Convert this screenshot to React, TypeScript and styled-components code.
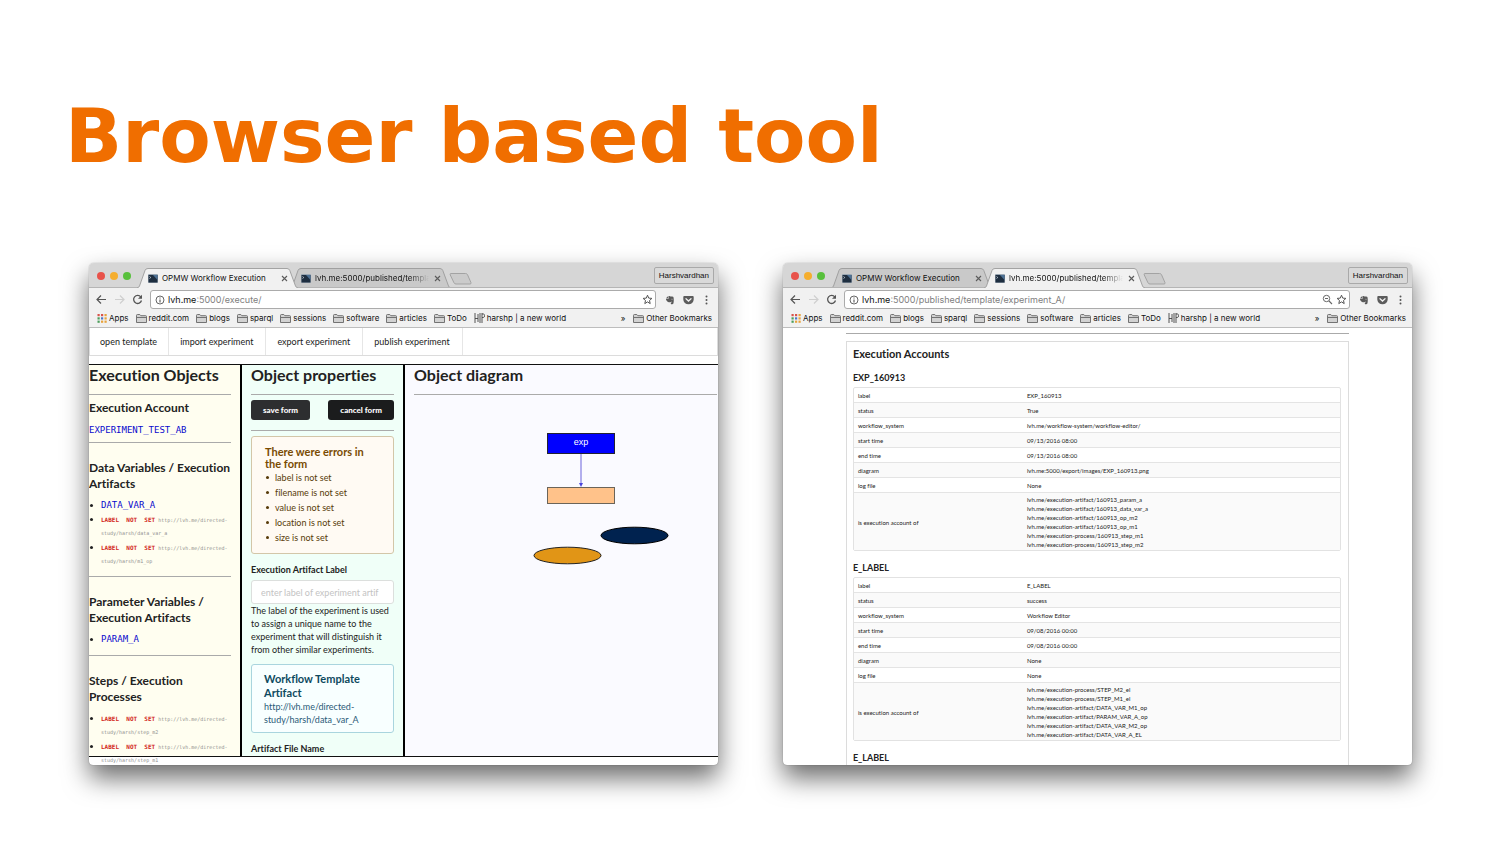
import React from "react";
import styled, { createGlobalStyle, css } from "styled-components";

const GlobalStyle = createGlobalStyle`
  *, *::before, *::after { box-sizing: border-box; }
  body { margin: 0; background: #fff; }
  h1, h2, h3, h4, p, ul { margin: 0; padding: 0; }
  button, input { font: inherit; color: inherit; }
  svg { flex: none; }
`;

const uiFont = `Inter, Roboto, sans-serif`;
const pageFont = `Lato, "Open Sans", sans-serif`;
const monoFont = `"DejaVu Sans Mono", "Liberation Mono", monospace`;

/* ---------- slide ---------- */

const Slide = styled.main`
  padding: 91px 88px 79px 89px;
`;

const Title = styled.h1`
  margin: 0 0 82px -24px;
  font: bold 75px/90px "DejaVu Sans", sans-serif;
  color: #f06e00;
`;

const Windows = styled.div`
  display: grid;
  grid-template-columns: repeat(2, minmax(0, 1fr));
  gap: 65px;
`;

/* ---------- browser window ---------- */

const WindowFrame = styled.section`
  display: flex;
  flex-direction: column;
  aspect-ratio: 629 / 502;
  overflow: hidden;
  border-radius: 5px 5px 4px 4px;
  background: #fff;
  box-shadow: 0 0 1px rgba(0, 0, 0, 0.5), 0 13px 26px rgba(0, 0, 0, 0.58);
`;

const Chrome = styled.header`
  flex: none;
  border-bottom: 1px solid #bdbdbd;
  background: #f1f1f1;
  font-family: ${uiFont};
  font-size: 8px;
  color: #111;
`;

const TabStrip = styled.div`
  display: flex;
  align-items: flex-end;
  height: 25px;
  background: #d6d6d6;
  box-shadow: inset 0 -1px #b5b5b5;
`;

const Lights = styled.div`
  display: flex;
  flex: none;
  align-self: center;
  gap: 5px;
  width: 48px;
  padding-left: 8px;
`;

const Light = styled.span<{ $color: string }>`
  width: 8px;
  height: 8px;
  border-radius: 50%;
  background: ${(p) => p.$color};
`;

const Tab = styled.div<{ $active: boolean }>`
  position: relative;
  z-index: ${(p) => (p.$active ? 1 : 0)};
  display: flex;
  flex: none;
  align-items: center;
  gap: 4px;
  width: 161px;
  height: 20px;
  margin-right: -8px;
  padding: 0 10px 0 11px;
`;

const TabShape = styled.svg`
  position: absolute;
  inset: 0;
  z-index: -1;
`;

const TabTitle = styled.span<{ $fade: boolean }>`
  flex: 1;
  min-width: 0;
  line-height: 12px;
  white-space: nowrap;
  ${(p) =>
    p.$fade &&
    css`
      mask-image: linear-gradient(to right, #000 82%, transparent);
    `}
`;

const IconButton = styled.button<{ $size?: number }>`
  display: flex;
  flex: none;
  align-items: center;
  justify-content: center;
  width: ${(p) => p.$size ?? 12}px;
  height: 12px;
  padding: 0;
  border: 0;
  background: none;
`;

const NewTab = styled(IconButton)`
  width: 24px;
  margin: 0 0 3px 6px;
`;

const Profile = styled.button`
  align-self: center;
  height: 17px;
  margin: 0 4px 0 auto;
  padding: 0 4px;
  border: 1px solid #a9a9a9;
  border-radius: 2px;
  background: #d9d9d9;
  font: 8px/14px "Liberation Sans", sans-serif;
`;

const Toolbar = styled.div`
  display: flex;
  align-items: center;
  gap: 6px;
  height: 23px;
  padding: 0 6px;
`;

const AddressBar = styled.label`
  display: flex;
  flex: 1;
  align-items: center;
  gap: 1px;
  min-width: 0;
  height: 19px;
  margin: 0 2px 0 1px;
  padding: 0 2px;
  border: 1px solid #ababab;
  border-radius: 3px;
  background: #fff;
  font-size: 9px;
  line-height: 14px;
`;

const AddressInput = styled.input`
  flex: 1;
  min-width: 0;
  height: 14px;
  margin-left: -1px;
  padding: 0;
  border: 0;
  outline: 0;
  background: none;
  color: #808080;
`;

const Bookmarks = styled.nav`
  display: flex;
  align-items: center;
  gap: 7px;
  height: 16px;
  padding: 0 6px 2px 8px;
  white-space: nowrap;
`;

const Bookmark = styled.a`
  display: flex;
  align-items: center;
  gap: 2px;
  color: inherit;
  line-height: 12px;
  text-decoration: none;
`;

const Overflow = styled(IconButton)`
  width: 6px;
  margin-left: auto;
`;

/* ---------- icons ---------- */

const Favicon = () => (
  <svg width="10" height="9" viewBox="0 0 10 9" aria-hidden="true">
    <rect width="10" height="9" rx="1" fill="#9aa7b3" />
    <rect x="0.5" y="1" width="9" height="7.5" fill="#1e2e40" />
    <path d="M5 1h4.500v5z" fill="#4d7195" />
    <path d="M1.500 2.500l1.300 1-1.300 1" stroke="#dfe8ef" strokeWidth="0.700" fill="none" />
  </svg>
);

const CloseIcon = () => (
  <svg width="7" height="7" viewBox="0 0 7 7" aria-hidden="true">
    <path d="M1 1l5 5M6 1L1 6" stroke="#5c5c5c" strokeWidth="1.100" />
  </svg>
);

const BackIcon = ({ forward = false }: { forward?: boolean }) => (
  <svg width="11" height="11" viewBox="0 0 11 11" aria-hidden="true">
    <path
      d={forward ? "M1 5.500h9M6 1.500l4 4-4 4" : "M10 5.500H1M5 1.500l-4 4 4 4"}
      stroke={forward ? "#cfcfcf" : "#555"}
      strokeWidth="1.200"
      fill="none"
    />
  </svg>
);

const ReloadIcon = () => (
  <svg width="11" height="11" viewBox="0 0 11 11" aria-hidden="true">
    <path d="M8.800 3A4 4 0 1 0 9.500 6.500" stroke="#555" strokeWidth="1.300" fill="none" />
    <path d="M10 0.800v4H6z" fill="#555" />
  </svg>
);

const InfoIcon = () => (
  <svg width="10" height="10" viewBox="0 0 10 10" aria-hidden="true">
    <circle cx="5" cy="5" r="4" stroke="#555" strokeWidth="0.900" fill="none" />
    <path d="M5 4.500v3M5 2.500v1.100" stroke="#555" strokeWidth="1.100" />
  </svg>
);

const StarIcon = () => (
  <svg width="11" height="11" viewBox="0 0 11 11" aria-hidden="true">
    <path
      d="M5.500 1.200l1.200 2.900 3.200.3-2.400 2.100.7 3.100-2.700-1.700-2.700 1.700.7-3.100L1.100 4.400l3.200-.3z"
      stroke="#555"
      strokeWidth="1"
      fill="none"
    />
  </svg>
);

const ZoomOutIcon = () => (
  <svg width="11" height="11" viewBox="0 0 11 11" aria-hidden="true">
    <circle cx="4.500" cy="4.500" r="3.200" stroke="#666" strokeWidth="1" fill="none" />
    <path d="M3 4.500h3M7 7l3 3" stroke="#666" strokeWidth="1.100" />
  </svg>
);

const EvernoteIcon = () => (
  <svg width="10" height="10" viewBox="0 0 10 10" aria-hidden="true">
    <path d="M1 3.200L3.200 1v2.200z" fill="#5a5a5a" />
    <path
      d="M3.600 1C4.600.8 5.200 1 5.500 1.500c1.300 0 2.500 0 2.900.6.500 1.900.5 4.800 0 6.500-.3.900-2.400.9-2.600-.2-.1-.8.500-1.300 1.300-1.200-.5-.7-1.400-.5-1.800.1C4 7.500 1.700 6.900 1 4.500V3.700h2.600z"
      fill="#5a5a5a"
    />
    <path d="M6.400 4.300c.4-.4 1-.3 1.200.2" stroke="#f1f1f1" strokeWidth="0.500" fill="none" />
  </svg>
);

const PocketIcon = () => (
  <svg width="11" height="10" viewBox="0 0 11 10" aria-hidden="true">
    <path d="M1.200 1h8.600q.9 0 .9.900v2.600a5.200 4.800 0 0 1-10.400 0V1.900q0-.9.900-.9z" fill="#5c5c5c" />
    <path d="M3 3.700l2.500 2.300L8 3.700" stroke="#f1f1f1" strokeWidth="1.300" fill="none" strokeLinecap="round" />
  </svg>
);

const MenuIcon = () => (
  <svg width="3" height="10" viewBox="0 0 3 10" aria-hidden="true">
    {[1.500, 5, 8.500].map((y) => (
      <circle key={y} cx="1.500" cy={y} r="1" fill="#555" />
    ))}
  </svg>
);

const appColors = ["#d9534a", "#d9534a", "#e8a33d", "#4b9d5b", "#4a76c9", "#e8a33d", "#4b9d5b", "#e8a33d", "#e8a33d"];

const AppsIcon = () => (
  <svg width="10" height="9" viewBox="0 0 10 9" aria-hidden="true">
    {appColors.map((c, i) => (
      <rect key={i} x={0.5 + (i % 3) * 3.500} y={Math.floor(i / 3) * 3.300} width="2.200" height="2.200" fill={c} />
    ))}
  </svg>
);

const FolderIcon = () => (
  <svg width="11" height="9" viewBox="0 0 11 9" aria-hidden="true">
    <path d="M.5 8.500v-7q0-1 .9-1h2.400l1 1.200h4.900q.8 0 .8.800v6z" fill="#d2d2d2" stroke="#666" strokeWidth="0.900" />
    <path d="M1 3.500h9.500" stroke="#666" strokeWidth="0.900" />
  </svg>
);

const HpIcon = () => (
  <svg width="11" height="10" viewBox="0 0 11 10" aria-hidden="true">
    <path d="M1 0v10M1 5.500h3M4 1v8M6 0v10M8 0v10M8 1h1.500q1 0 1 1.700t-1 1.800H8" stroke="#444" strokeWidth="0.900" fill="none" />
  </svg>
);

const folders = ["reddit.com", "blogs", "sparql", "sessions", "software", "articles", "ToDo"];
const tabTitles = ["OPMW Workflow Execution", "lvh.me:5000/published/templa"];

interface BrowserProps {
  activeTab: number;
  path: string;
  zoomed?: boolean;
  children: React.ReactNode;
}

const Browser = ({ activeTab, path, zoomed, children }: BrowserProps) => (
  <WindowFrame>
    <Chrome>
      <TabStrip>
        <Lights>
          <Light $color="#e8524a" />
          <Light $color="#f5ae2e" />
          <Light $color="#58c03c" />
        </Lights>
        {tabTitles.map((title, i) => {
          const active = i === activeTab;
          return (
            <Tab key={title} $active={active}>
              <TabShape width="161" height="20" viewBox="0 0 161 20" aria-hidden="true">
                <path
                  d="M0 20Q2 19.500 2.500 18L8 2.500Q8.600.5 11 .5H150Q152 .5 152.800 2.500L158.500 18Q159 19.500 161 20"
                  fill={active ? "#f1f1f1" : "#c9c9c9"}
                  stroke="#9b9b9b"
                  strokeWidth="0.900"
                />
                {!active && <path d="M0 19.500h161" stroke="#b5b5b5" />}
              </TabShape>
              <Favicon />
              <TabTitle $fade={i === 1}>{title}</TabTitle>
              <IconButton $size={8} aria-label="Close tab">
                <CloseIcon />
              </IconButton>
            </Tab>
          );
        })}
        <NewTab aria-label="New tab">
          <svg width="24" height="12" viewBox="0 0 24 12" aria-hidden="true">
            <path d="M2 .5h14.500q1.500 0 2 1.200l3.500 8q.4 1.300-1 1.300H7q-1.500 0-2-1.200L1.200 1.800Q.8.5 2 .5z" fill="#cbcbcb" stroke="#a3a3a3" />
          </svg>
        </NewTab>
        <Profile>Harshvardhan</Profile>
      </TabStrip>
      <Toolbar>
        <IconButton aria-label="Back"><BackIcon /></IconButton>
        <IconButton aria-label="Forward"><BackIcon forward /></IconButton>
        <IconButton aria-label="Reload"><ReloadIcon /></IconButton>
        <AddressBar>
          <IconButton $size={14} aria-label="Site information"><InfoIcon /></IconButton>
          lvh.me
          <AddressInput aria-label="Address" defaultValue={path} />
          {zoomed && <IconButton $size={13} aria-label="Zoom"><ZoomOutIcon /></IconButton>}
          <IconButton aria-label="Bookmark this page"><StarIcon /></IconButton>
        </AddressBar>
        <IconButton aria-label="Evernote"><EvernoteIcon /></IconButton>
        <IconButton aria-label="Pocket"><PocketIcon /></IconButton>
        <IconButton aria-label="Menu"><MenuIcon /></IconButton>
      </Toolbar>
      <Bookmarks>
        <Bookmark href="#"><AppsIcon />Apps</Bookmark>
        {folders.map((name) => (
          <Bookmark key={name} href="#"><FolderIcon />{name}</Bookmark>
        ))}
        <Bookmark href="#"><HpIcon />harshp | a new world</Bookmark>
        <Overflow aria-label="More bookmarks">»</Overflow>
        <Bookmark href="#"><FolderIcon />Other Bookmarks</Bookmark>
      </Bookmarks>
    </Chrome>
    {children}
  </WindowFrame>
);

/* ---------- execution editor ---------- */

const Editor = styled.div`
  display: flex;
  flex: 1;
  flex-direction: column;
  min-height: 0;
  padding-bottom: 8px;
  font-family: ${pageFont};
  font-variant-ligatures: none;
  color: #222;
`;

const Menu = styled.nav`
  display: flex;
  flex: none;
  height: 28px;
  margin-bottom: 8px;
  border: solid #dcdcdc;
  border-width: 0 1px 1px;
`;

const MenuItem = styled.a`
  padding: 0 12px 0 11px;
  border-right: 1px solid #e6e6e6;
  color: #222;
  font-size: 9px;
  line-height: 27px;
  text-decoration: none;
  &:first-child { padding: 0 11px 0 10px; }
`;

const Columns = styled.div`
  display: grid;
  flex: 1;
  grid-template-columns: 153fr 163fr 313fr;
  min-height: 0;
  border: solid #111;
  border-width: 1px 0;
`;

const Column = styled.section<{ $bg: string; $clip?: boolean }>`
  min-width: 0;
  min-height: 0;
  padding: 0 9px 0 ${(p) => (p.$clip ? 9 : 0)}px;
  overflow: ${(p) => (p.$clip ? "hidden" : "visible")};
  border-right: 2px solid #000;
  background: ${(p) => p.$bg};
  &:last-child {
    padding-right: 1px;
    border-right: 0;
  }
`;

const ColumnTitle = styled.h2`
  margin-bottom: 10px;
  font-size: 16px;
  line-height: 19px;
  white-space: nowrap;
`;

const Rule = styled.hr<{ $top?: number; $bottom?: number }>`
  height: 1px;
  margin: ${(p) => p.$top ?? 0}px 0 ${(p) => p.$bottom ?? 5}px;
  border: 0;
  background: #aaa;
`;

const GroupTitle = styled.h3`
  margin-bottom: 6px;
  font-size: 12px;
  line-height: 16px;
  white-space: nowrap;
`;

const ObjectLink = styled.a`
  display: block;
  color: #0a0acd;
  font: 9px/14px ${monoFont};
  text-decoration: none;
`;

const AccountLink = styled(ObjectLink)`
  line-height: 16px;
`;

const ObjectList = styled.ul`
  list-style: none;
`;

const ObjectItem = styled.li`
  display: flex;
  gap: 8px;
  &::before {
    content: "";
    flex: none;
    width: 3px;
    height: 3px;
    margin: 6px 0 0 1px;
    border-radius: 50%;
    background: #222;
  }
`;

const Unlabelled = styled.p`
  margin-top: 2px;
  color: #8f8f8f;
  font: 5px/13px ${monoFont};
`;

const Missing = styled.strong`
  color: #d2261a;
  font-size: 6px;
  line-height: 1;
  white-space: pre;
`;

const Actions = styled.div`
  display: flex;
  justify-content: space-between;
`;

const FormButton = styled.button<{ $bg: string }>`
  height: 20px;
  padding: 0 12px;
  border: 0;
  border-radius: 3px;
  background: ${(p) => p.$bg};
  color: #fff;
  font-size: 8px;
  font-weight: 900;
`;

const ErrorBox = styled.div`
  padding: 9px 13px 8px;
  border: 1px solid #d3c6a8;
  border-radius: 3px;
  background: #fffaf3;
  color: #573a08;
  font-size: 9px;
`;

const ErrorTitle = styled.h4`
  color: #794b02;
  font-size: 11px;
  line-height: 12px;
`;

const ErrorItem = styled(ObjectItem)`
  gap: 6px;
  line-height: 15px;
  &::before {
    background: #573a08;
  }
`;

const FieldLabel = styled.label`
  display: block;
  margin-top: 10px;
  font-size: 9px;
  font-weight: bold;
  line-height: 12px;
`;

const TextField = styled.input`
  display: block;
  width: 100%;
  height: 24px;
  margin: 4px 0 0;
  padding: 0 10px 0 9px;
  border: 1px solid #dcdfdd;
  border-radius: 3px;
  background: #fff;
  font-size: 9px;
  &::placeholder { color: #c3c3c3; }
`;

const Help = styled.p`
  margin-bottom: 8px;
  font-size: 9px;
  line-height: 13px;
  white-space: nowrap;
`;

const InfoBox = styled.div`
  padding: 7px 12px 6px;
  border: 1px solid #a9d5de;
  border-radius: 3px;
  background: #f8ffff;
  color: #2a5a78;
  font-size: 9px;
  line-height: 13px;
`;

const InfoTitle = styled.h4`
  color: #0e4a60;
  font-size: 11px;
  line-height: 14px;
`;

const menu = ["open template", "import experiment", "export experiment", "publish experiment"];
const errors = ["label", "filename", "value", "location", "size"];

const UnlabelledItem = ({ name }: { name: string }) => (
  <ObjectItem>
    <Unlabelled>
      <Missing>{"LABEL  NOT  SET"}</Missing> http://lvh.me/directed-
      <br />
      study/harsh/{name}
    </Unlabelled>
  </ObjectItem>
);

const ExecutionEditor = () => (
  <Editor>
    <Menu>
      {menu.map((item) => (
        <MenuItem key={item} href="#">{item}</MenuItem>
      ))}
    </Menu>
    <Columns>
      <Column $bg="#fffef0">
        <ColumnTitle>Execution Objects</ColumnTitle>
        <Rule />
        <GroupTitle>Execution Account</GroupTitle>
        <AccountLink href="#">EXPERIMENT_TEST_AB</AccountLink>
        <Rule $top={4} $bottom={17} />
        <GroupTitle>Data Variables / Execution<br />Artifacts</GroupTitle>
        <ObjectList>
          <ObjectItem><ObjectLink href="#">DATA_VAR_A</ObjectLink></ObjectItem>
          <UnlabelledItem name="data_var_a" />
          <UnlabelledItem name="m1_op" />
        </ObjectList>
        <Rule $top={8} $bottom={17} />
        <GroupTitle>Parameter Variables /<br />Execution Artifacts</GroupTitle>
        <ObjectList>
          <ObjectItem><ObjectLink href="#">PARAM_A</ObjectLink></ObjectItem>
        </ObjectList>
        <Rule $top={9} $bottom={17} />
        <GroupTitle>Steps / Execution<br />Processes</GroupTitle>
        <ObjectList>
          <UnlabelledItem name="step_m2" />
          <UnlabelledItem name="step_m1" />
        </ObjectList>
      </Column>
      <Column $bg="#f0fff8" $clip>
        <ColumnTitle>Object properties</ColumnTitle>
        <Rule />
        <Actions>
          <FormButton $bg="#2d2e30">save form</FormButton>
          <FormButton $bg="#1b1c1d">cancel form</FormButton>
        </Actions>
        <Rule $top={10} />
        <ErrorBox>
          <ErrorTitle>There were errors in<br />the form</ErrorTitle>
          <ObjectList>
            {errors.map((name) => (
              <ErrorItem key={name}>{name} is not set</ErrorItem>
            ))}
          </ObjectList>
        </ErrorBox>
        <FieldLabel htmlFor="artifact-label">Execution Artifact Label</FieldLabel>
        <TextField id="artifact-label" placeholder="enter label of experiment artif" />
        <Help>
          The label of the experiment is used<br />
          to assign a unique name to the<br />
          experiment that will distinguish it<br />
          from other similar experiments.
        </Help>
        <InfoBox>
          <InfoTitle>Workflow Template<br />Artifact</InfoTitle>
          http://lvh.me/directed-<br />study/harsh/data_var_A
        </InfoBox>
        <FieldLabel as="p">Artifact File Name</FieldLabel>
      </Column>
      <Column $bg="#fafaff" $clip>
        <ColumnTitle>Object diagram</ColumnTitle>
        <Rule />
        <svg width="303" height="180" viewBox="0 0 303 180" role="img" aria-label="Experiment diagram">
          <rect x="133.500" y="33.500" width="67" height="20" fill="#00f" stroke="#223" />
          <text x="167" y="45" textAnchor="middle" fill="#fff" fontFamily="Liberation Sans, sans-serif" fontSize="9">exp</text>
          <path d="M167 54v30" stroke="#6a62dc" />
          <path d="M165 83h4l-2 4z" fill="#4a44dd" />
          <rect x="133.500" y="87.500" width="67" height="16" fill="#ffc28a" stroke="#6b6459" />
          <ellipse cx="220.500" cy="135.500" rx="33.500" ry="8.300" fill="#00224f" stroke="#000" />
          <ellipse cx="153.500" cy="155.500" rx="33.500" ry="8.300" fill="#e19516" stroke="#222" />
        </svg>
      </Column>
    </Columns>
  </Editor>
);

/* ---------- published page ---------- */

const Published = styled.div`
  flex: 1;
  min-height: 0;
  padding: 5px 10% 0;
  overflow: hidden;
  font-family: ${pageFont};
  font-variant-ligatures: none;
  color: #222;
`;

const Accounts = styled.section`
  margin-top: 7px;
  padding: 5px 7px 20px 6px;
  border: 1px solid #dcdcdc;
`;

const AccountsTitle = styled.h2`
  font-size: 11px;
  line-height: 14px;
`;

const AccountName = styled.h3`
  margin: 11px 0 3px;
  font-size: 9px;
  line-height: 12px;
`;

const DataTable = styled.table`
  width: 100%;
  table-layout: fixed;
  border: 1px solid #e2e2e2;
  border-radius: 2px;
  border-spacing: 0;
  font-size: 6px;
  line-height: 9px;
  tr:nth-child(even) { background: #fafafa; }
  tr + tr > * { border-top: 1px solid #e4e4e4; }
`;

const NameCell = styled.th`
  width: 172px;
  padding: 3px 4px 2px;
  font-weight: normal;
  text-align: left;
  tr:last-child > & { padding-block: 2px 1px; }
`;

const ValueCell = styled.td`
  padding: 3px 1px 2px;
  tr:last-child > & { padding-block: 2px 1px; }
`;

const Line = styled.div``;

const rowNames = ["label", "status", "workflow_system", "start time", "end time", "diagram", "log file", "is execution account of"];

const accounts: { name: string; values: string[]; members: string[] }[] = [
  {
    name: "EXP_160913",
    values: ["EXP_160913", "True", "lvh.me/workflow-system/workflow-editor/", "09/13/2016 08:00", "09/13/2016 08:00", "lvh.me:5000/export/images/EXP_160913.png", "None"],
    members: [
      "lvh.me/execution-artifact/160913_param_a",
      "lvh.me/execution-artifact/160913_data_var_a",
      "lvh.me/execution-artifact/160913_op_m2",
      "lvh.me/execution-artifact/160913_op_m1",
      "lvh.me/execution-process/160913_step_m1",
      "lvh.me/execution-process/160913_step_m2",
    ],
  },
  {
    name: "E_LABEL",
    values: ["E_LABEL", "success", "Workflow Editor", "09/08/2016 00:00", "09/08/2016 00:00", "None", "None"],
    members: [
      "lvh.me/execution-process/STEP_M2_el",
      "lvh.me/execution-process/STEP_M1_el",
      "lvh.me/execution-artifact/DATA_VAR_M1_op",
      "lvh.me/execution-artifact/PARAM_VAR_A_op",
      "lvh.me/execution-artifact/DATA_VAR_M2_op",
      "lvh.me/execution-artifact/DATA_VAR_A_EL",
    ],
  },
];

const PublishedPage = () => (
  <Published>
    <Rule $bottom={0} />
    <Accounts>
      <AccountsTitle>Execution Accounts</AccountsTitle>
      {accounts.map((account) => (
        <React.Fragment key={account.name}>
          <AccountName>{account.name}</AccountName>
          <DataTable>
            <tbody>
              {rowNames.map((name, i) => (
                <tr key={name}>
                  <NameCell scope="row">{name}</NameCell>
                  <ValueCell>
                    {i < account.values.length
                      ? account.values[i]
                      : account.members.map((m) => <Line key={m}>{m}</Line>)}
                  </ValueCell>
                </tr>
              ))}
            </tbody>
          </DataTable>
        </React.Fragment>
      ))}
      <AccountName>E_LABEL</AccountName>
    </Accounts>
  </Published>
);

export default function App() {
  return (
    <>
      <GlobalStyle />
      <Slide>
        <Title>Browser based tool</Title>
        <Windows>
          <Browser activeTab={0} path=":5000/execute/">
            <ExecutionEditor />
          </Browser>
          <Browser activeTab={1} path=":5000/published/template/experiment_A/" zoomed>
            <PublishedPage />
          </Browser>
        </Windows>
      </Slide>
    </>
  );
}
